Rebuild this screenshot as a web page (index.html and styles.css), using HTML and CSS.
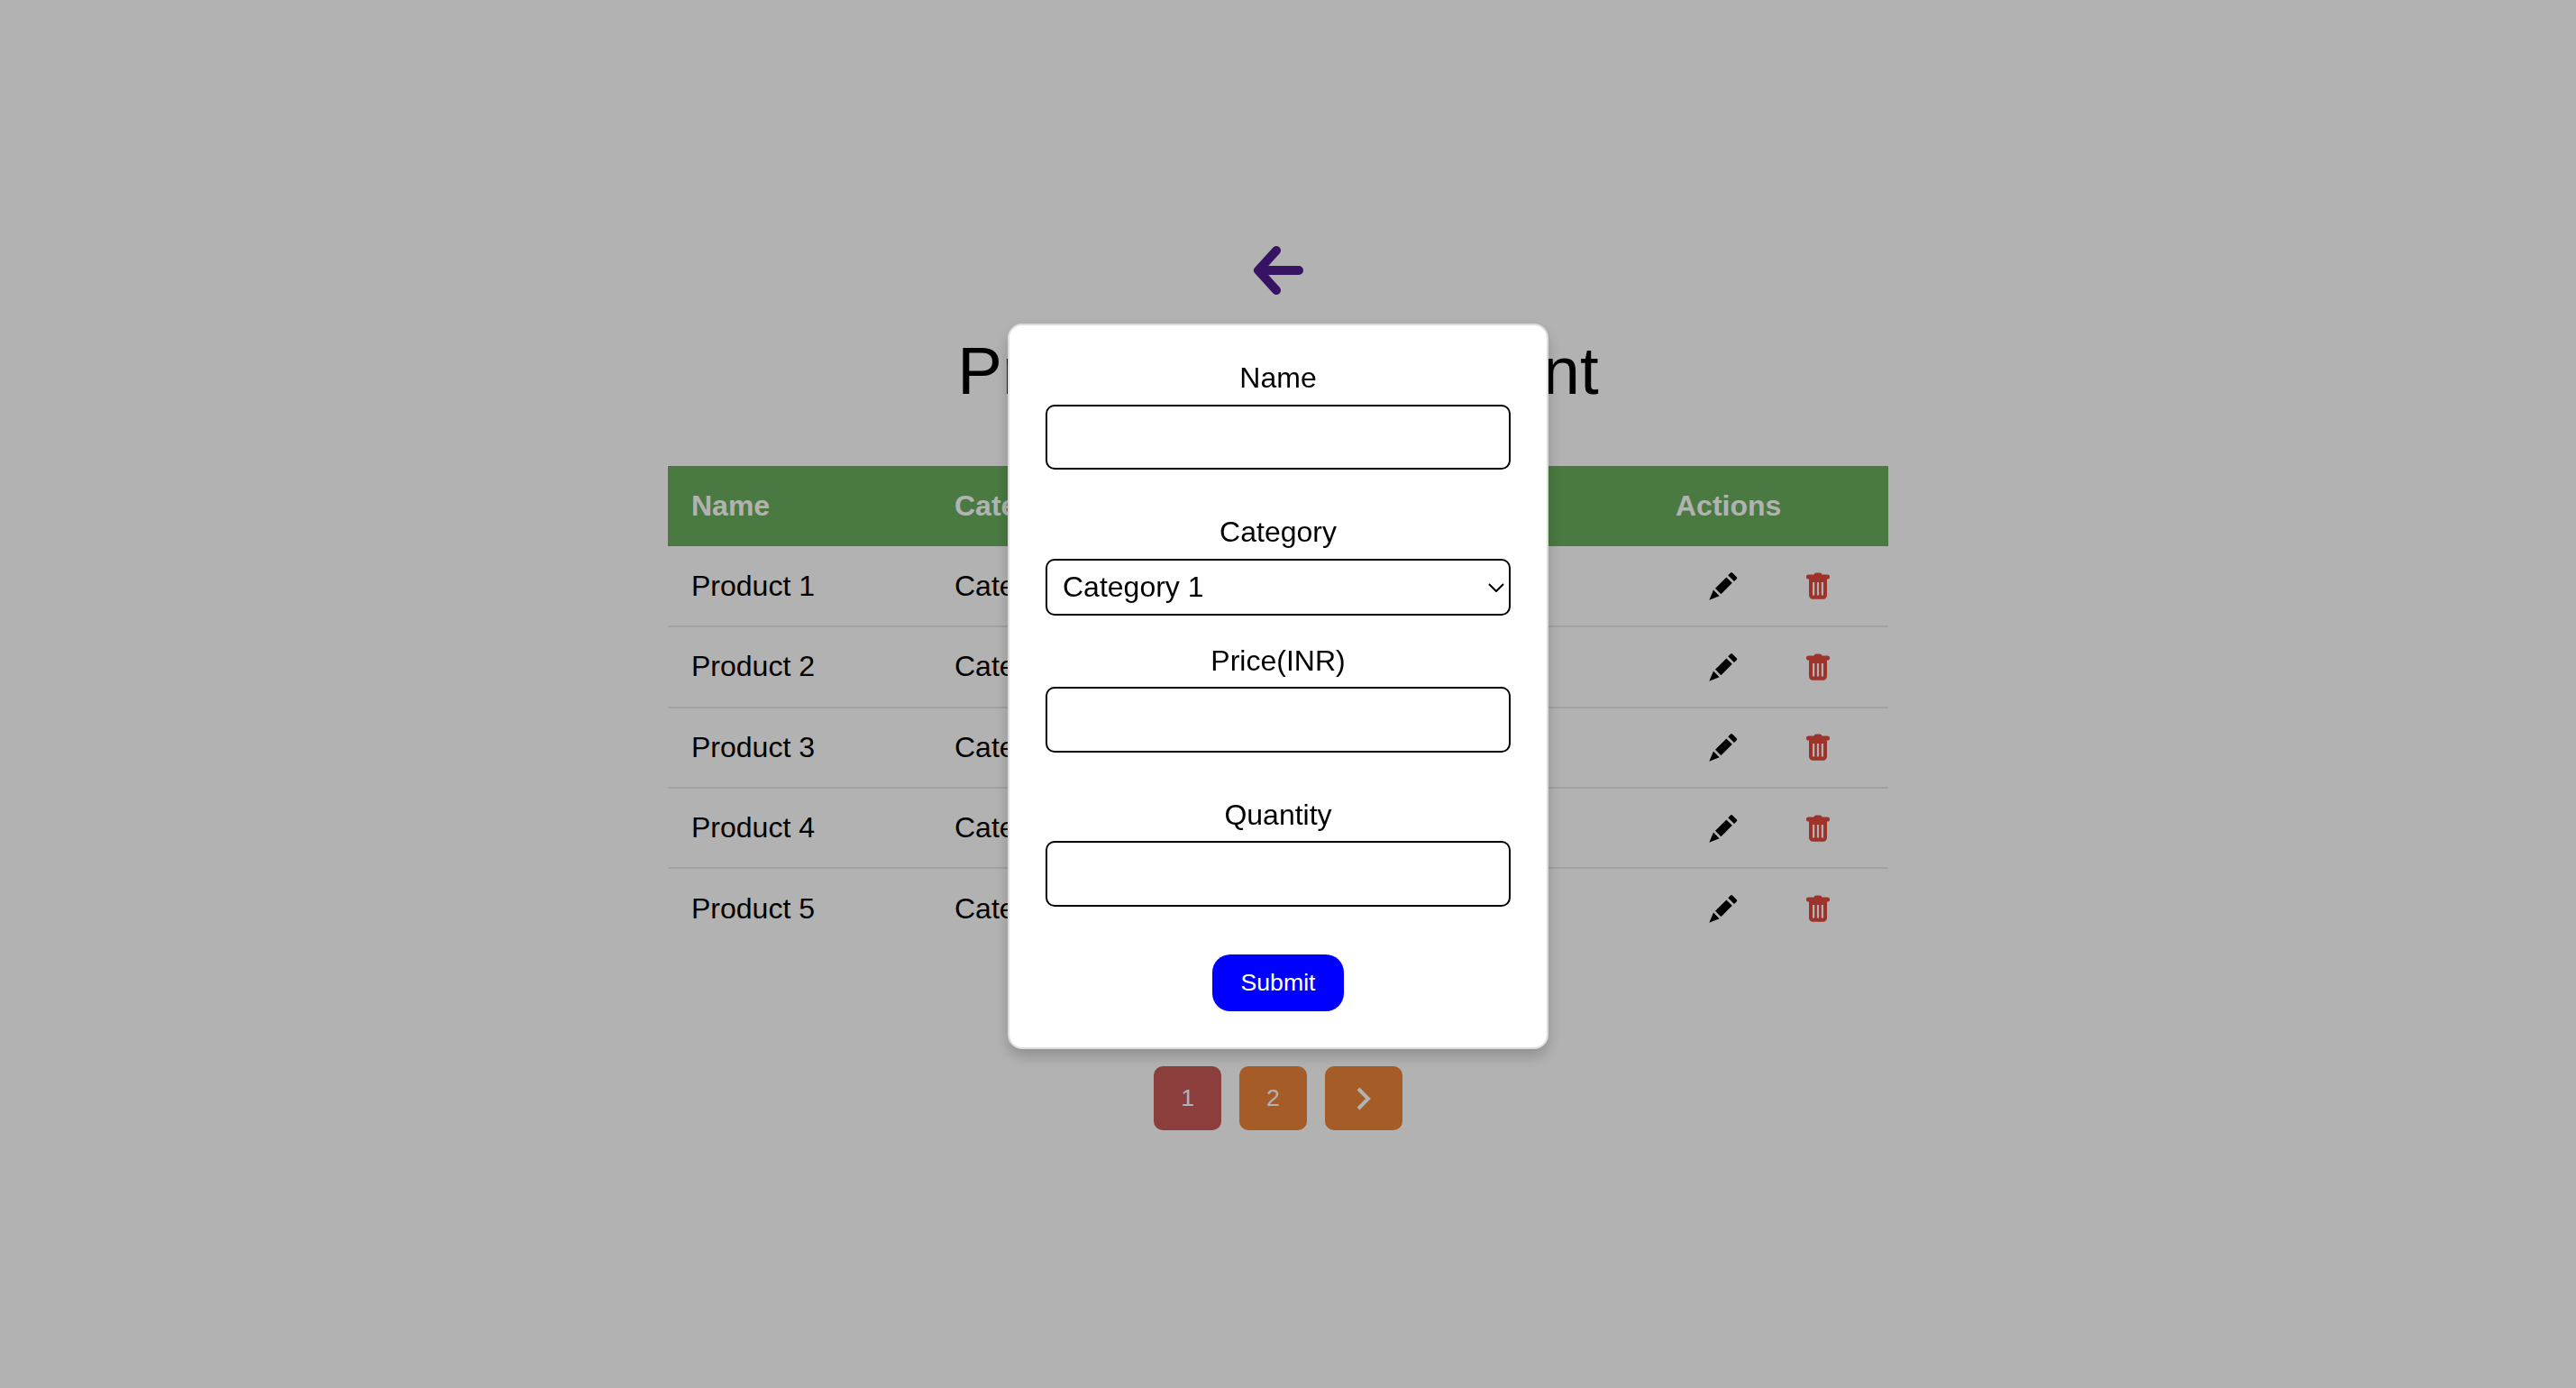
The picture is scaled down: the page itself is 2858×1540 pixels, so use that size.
FILE: index.html
```html
<!DOCTYPE html>
<html lang="en">
<head>
  <meta charset="UTF-8">
  <meta name="viewport" content="width=device-width, initial-scale=1.0">
  <title>Product Management</title>
  <link rel="stylesheet" href="styles.css">
</head>
<body>
  <svg class="icon-defs" width="0" height="0" aria-hidden="true">
    <symbol id="icon-pencil" viewBox="0 0 32 32">
      <path d="M0.3 31.7 5 20.6 11.6 27.2Z"/>
      <path d="M7 18.8 19.4 6.4 25.8 12.8 13.4 25.2Z"/>
      <path d="M21.2 4.2 24 1.4Q25 .4 26 1.4L30.8 6.2Q31.8 7.2 30.8 8.2L28 11Z"/>
    </symbol>
    <symbol id="icon-trash" viewBox="0 0 26 30">
      <path fill-rule="evenodd" d="M8.5 2.4 Q9 .4 11 .4H15Q17 .4 17.5 2.4H23.5A2.6 2.6 0 0 1 23.5 7.6H23V25.5A4.2 4.2 0 0 1 18.8 29.7H7.2A4.2 4.2 0 0 1 3 25.5V7.6H2.5A2.6 2.6 0 0 1 2.5 2.4ZM7 11V25.5H9.2V11ZM11.9 11V25.5H14.1V11ZM16.8 11V25.5H19V11Z"/>
    </symbol>
  </svg>

  <div class="page">
    <a class="back-link" href="#">
      <svg class="back-icon" width="56" height="54" viewBox="0 0 56 54">
        <path d="M51 27H6M26 5 6 27 26 49"/>
      </svg>
    </a>
    <h1 class="page-title">Product Management</h1>

    <table class="product-table">
      <colgroup>
        <col class="col-name">
        <col class="col-category">
        <col class="col-price">
        <col class="col-quantity">
        <col class="col-actions">
      </colgroup>
      <thead>
        <tr>
          <th>Name</th>
          <th>Category</th>
          <th>Price</th>
          <th>Quantity</th>
          <th>Actions</th>
        </tr>
      </thead>
      <tbody>
        <tr>
          <td>Product 1</td>
          <td>Category 1</td>
          <td>100</td>
          <td>10</td>
          <td>
            <div class="row-actions">
              <svg class="icon-edit" width="32" height="32"><use href="#icon-pencil"/></svg>
              <svg class="icon-delete" width="26" height="30"><use href="#icon-trash"/></svg>
            </div>
          </td>
        </tr>
        <tr>
          <td>Product 2</td>
          <td>Category 2</td>
          <td>200</td>
          <td>20</td>
          <td>
            <div class="row-actions">
              <svg class="icon-edit" width="32" height="32"><use href="#icon-pencil"/></svg>
              <svg class="icon-delete" width="26" height="30"><use href="#icon-trash"/></svg>
            </div>
          </td>
        </tr>
        <tr>
          <td>Product 3</td>
          <td>Category 3</td>
          <td>300</td>
          <td>30</td>
          <td>
            <div class="row-actions">
              <svg class="icon-edit" width="32" height="32"><use href="#icon-pencil"/></svg>
              <svg class="icon-delete" width="26" height="30"><use href="#icon-trash"/></svg>
            </div>
          </td>
        </tr>
        <tr>
          <td>Product 4</td>
          <td>Category 4</td>
          <td>400</td>
          <td>40</td>
          <td>
            <div class="row-actions">
              <svg class="icon-edit" width="32" height="32"><use href="#icon-pencil"/></svg>
              <svg class="icon-delete" width="26" height="30"><use href="#icon-trash"/></svg>
            </div>
          </td>
        </tr>
        <tr>
          <td>Product 5</td>
          <td>Category 5</td>
          <td>500</td>
          <td>50</td>
          <td>
            <div class="row-actions">
              <svg class="icon-edit" width="32" height="32"><use href="#icon-pencil"/></svg>
              <svg class="icon-delete" width="26" height="30"><use href="#icon-trash"/></svg>
            </div>
          </td>
        </tr>
      </tbody>
    </table>

    <div class="pagination">
      <button class="page-btn active" type="button">1</button>
      <button class="page-btn" type="button">2</button>
      <button class="page-btn" type="button">
        <svg class="next-icon" width="26" height="26" viewBox="0 0 26 26">
          <path d="M7 2 18 13 7 24"/>
        </svg>
      </button>
    </div>
  </div>

  <div class="overlay">
    <form class="modal">
      <label class="field-label" for="name">Name</label>
      <input class="field-input" id="name" type="text">

      <label class="field-label" for="category">Category</label>
      <div class="select-wrap">
        <select class="field-select" id="category">
          <option>Category 1</option>
          <option>Category 2</option>
          <option>Category 3</option>
        </select>
        <svg class="select-arrow" width="18" height="10" viewBox="0 0 18 10">
          <path d="M1 1 9 9 17 1"/>
        </svg>
      </div>

      <label class="field-label" for="price">Price(INR)</label>
      <input class="field-input" id="price" type="text">

      <label class="field-label" for="quantity">Quantity</label>
      <input class="field-input" id="quantity" type="text">

      <button class="submit-btn" type="button">Submit</button>
    </form>
  </div>
</body>
</html>
```

FILE: styles.css
```css
* {
  box-sizing: border-box;
}
body {
  margin: 0;
  background-color: white;
  font-family: "Liberation Sans", Arial, sans-serif;
  font-size: 32px;
  color: black;
}
.icon-defs {
  display: block;
  position: absolute;
}

.page {
  width: 2836px;
  padding-top: 273px;
  display: flex;
  flex-direction: column;
  align-items: center;
}
.back-link {
  display: block;
  height: 54px;
}
.back-icon {
  display: block;
  fill: none;
  stroke: #501d8f;
  stroke-width: 10;
  stroke-linecap: round;
  stroke-linejoin: round;
}
.page-title {
  margin: 42px 0 63px;
  font-size: 74.4px;
  font-weight: normal;
}

.product-table {
  width: 1354px;
  table-layout: fixed;
  border-collapse: collapse;
}
.col-name { width: 292px; }
.col-category { width: 260px; }
.col-price { width: 240px; }
.col-quantity { width: 300px; }
.col-actions { width: 262px; }
.product-table th {
  height: 89px;
  padding: 0 26px;
  text-align: left;
  font-weight: bold;
  color: white;
  background-color: #6aae5d;
}
.product-table td {
  height: 89.3px;
  padding: 0 26px;
  border-bottom: 2px solid #e8e8e8;
}
.product-table tbody tr:last-child td {
  border-bottom: none;
}
.row-actions {
  display: flex;
  align-items: center;
  gap: 76px;
  padding-left: 37px;
}
.icon-edit {
  fill: black;
}
.icon-delete {
  fill: #e24a3f;
}

.pagination {
  display: flex;
  gap: 20px;
  margin-top: 131px;
}
.page-btn {
  padding: 20px 30px;
  border: none;
  border-radius: 10px;
  font-family: inherit;
  font-size: 26.67px;
  color: white;
  background-color: #ec8538;
}
.page-btn.active {
  background-color: #c75a56;
}
.next-icon {
  display: block;
  fill: none;
  stroke: white;
  stroke-width: 4;
}

.overlay {
  position: fixed;
  inset: 0;
  display: flex;
  justify-content: center;
  align-items: flex-start;
  padding: 359px 22px 0 0;
  background-color: rgba(0, 0, 0, 0.3);
}
.modal {
  width: 600px;
  padding: 40px;
  display: flex;
  flex-direction: column;
  background-color: white;
  border: 2px solid #ddd;
  border-radius: 16px;
  box-shadow: 0 8px 16px rgba(0, 0, 0, 0.2);
}
.field-label {
  margin-bottom: 10.5px;
  text-align: center;
}
.field-input {
  height: 72.5px;
  margin-bottom: 51px;
  padding: 0 16px;
  font-family: inherit;
  font-size: 32px;
  border: 2px solid black;
  border-radius: 10px;
}
.select-wrap {
  position: relative;
  margin-bottom: 32px;
}
.field-select {
  display: block;
  width: 100%;
  height: 63px;
  padding: 0 17px;
  appearance: none;
  font-family: inherit;
  font-size: 32px;
  color: black;
  background-color: white;
  border: 2px solid black;
  border-radius: 10px;
}
.select-arrow {
  position: absolute;
  top: 27px;
  right: 7px;
  fill: none;
  stroke: black;
  stroke-width: 2;
  pointer-events: none;
}
.submit-btn {
  align-self: center;
  margin-top: 2.5px;
  padding: 16px 32px;
  border: none;
  border-radius: 20px;
  font-family: inherit;
  font-size: 26.67px;
  color: white;
  background-color: #0000ff;
}
```
